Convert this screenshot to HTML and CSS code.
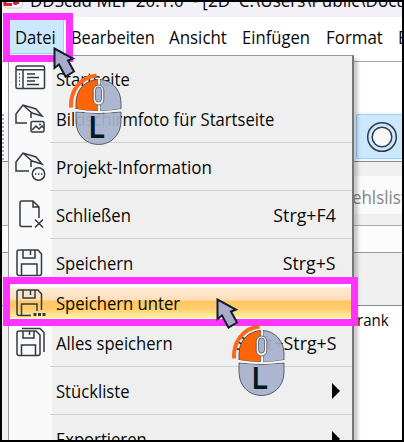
FILE: index.html
```html
<!DOCTYPE html>
<html lang="de">
<head>
<meta charset="utf-8">
<title>DDScad MEP</title>
<link rel="stylesheet" href="styles.css">
</head>
<body>
<div class="window">
  <header class="titlebar">
    <svg class="logo" width="20" height="22"><rect x=".5" y="-4" width="19" height="25" rx="4" fill="#fff" stroke="#ccc"/><path d="M2 10v7.500h7M12.500 13v5M10 15.500h6" fill="none" stroke="#e51c35" stroke-width="3"/></svg>
    <span class="title">DDScad MEP 20.1.0 &nbsp;- [2D &nbsp;C:\Users\Public\Docu</span>
  </header>
  <nav class="menubar">
    <span class="tab active"><span class="t">Datei</span></span>
    <span class="tab bearbeiten"><span class="t">Bearbeiten</span></span>
    <span class="tab ansicht"><span class="t">Ansicht</span></span>
    <span class="tab einfuegen"><span class="t">Einfügen</span></span>
    <span class="tab format"><span class="t">Format</span></span>
    <span class="tab"><span class="t">E</span></span>
  </nav>
  <main class="workspace">
    <section class="toolbar"><div class="grip"></div><div class="tool"><svg width="32" height="32" fill="none" stroke="#303b44" stroke-width="1.5"><circle cx="16" cy="16" r="14.3"/><circle cx="16" cy="16" r="9.8" fill="#f8f8f8"/></svg></div></section>
    <section class="gap"></section>
    <section class="command"><span class="t">ehlslist</span></section>
    <section class="band"></section>
    <section class="rule"></section>
    <section class="head"></section>
    <section class="tree"><span class="t">rank</span></section>
  </main>
</div>

<div class="menu">
  <div class="item"><svg class="icon" viewBox="0 0 34 34"><rect x="1" y="4" width="28.500" height="22.500" rx="1.5"/><path d="M1 7.7h28.500M8 8v18M12 12h8M12 15.500h12M12 19h8M12 22.500h12M4 12h1M4 15.500h1M4 19h1M4 22.500h1"/></svg><span class="t">Startseite</span></div>
  <div class="item"><svg class="icon" viewBox="0 0 34 34"><path d="M12 21H1v-9L8 3l13 4 6 7-10-3L8 3M16 11v5"/><rect x="16" y="19.500" width="13" height="10.500" rx="1.5"/><path d="m17 28 4-4 3 3 3-3 2 2M24 22.500h2"/></svg><span class="t">Bildschirmfoto für Startseite</span></div>
  <div class="sep"></div>
  <div class="item"><svg class="icon" viewBox="0 0 34 34"><path d="M14 21H1v-9L8 3l13 4 6 7-10-3L8 3M16 11v6"/><circle cx="23.500" cy="24" r="6.200"/><path d="M20 24h1.400M23 24h1.400M26 24h1.400"/></svg><span class="t wide">Projekt-Information</span></div>
  <div class="sep"></div>
  <div class="item"><svg class="icon" viewBox="0 0 34 34"><path d="M17 28.500H7a2 2 0 0 1-2-2V5a2 2 0 0 1 2-2h11l6 6v11M18 3v6h6M20 21.500l8 8M28 21.500l-8 8"/></svg><span class="t">Schließen</span><span class="key">Strg+F4</span></div>
  <div class="sep"></div>
  <div class="item"><svg class="icon" viewBox="0 0 34 34"><path d="M4 4h19l3.500 4v19.500a2 2 0 0 1-2 2H4a2 2 0 0 1-2-2V6a2 2 0 0 1 2-2zM8 4v8h12V4M15.500 4v5M6.500 29V18h15.500v11"/></svg><span class="t">Speichern</span><span class="key">Strg+S</span></div>
  <div class="item selected"><svg class="icon" viewBox="0 0 34 34"><path d="M16 29.500H4a2 2 0 0 1-2-2V6a2 2 0 0 1 2-2h19l3.500 4v16M8 4v8h12V4M15.500 4v5M6.500 29V18h15.500v7"/><path d="M18.500 28.500h3M23 28.500h3M27.500 28.500h3" stroke-width="3"/></svg><span class="t">Speichern unter</span></div>
  <div class="item"><svg class="icon" viewBox="0 0 34 34"><path d="M4 5h17l4 4v18.500a2 2 0 0 1-2 2H4a2 2 0 0 1-2-2V7a2 2 0 0 1 2-2zM8 5v7h11V5M14.500 5v4M6.500 29V19h14v10M7 2.500h18l4 4V26"/></svg><span class="t">Alles speichern</span><span class="key">Shift+Strg+S</span></div>
  <div class="sep"></div>
  <div class="item"><span class="icon"></span><span class="t">Stückliste</span><svg class="arrow" width="8" height="16"><path d="M0 0v16l8-8z"/></svg></div>
  <div class="sep"></div>
  <div class="item"><span class="icon"></span><span class="t">Exportieren</span><svg class="arrow" width="8" height="16"><path d="M0 0v16l8-8z"/></svg></div>
</div>

<div class="mark mark-file"></div>
<div class="mark mark-save"></div>

<svg class="hint hint-file" width="72" height="102" viewBox="0 0 72 102"><use href="#hint"/></svg>
<svg class="hint hint-save" width="72" height="102" viewBox="0 0 72 102">
  <defs><g id="hint">
    <path d="M1.500 1.500V21L6 17.500 12.500 29.500 21 24.500 15 13.500 20 11.500z" fill="#a9abcd" stroke="#111f29" stroke-width="2"/>
    <path d="M18 60.500C17 44 27 30 43.500 28.500" fill="none" stroke="#ff681b" stroke-width="4"/>
    <path d="M23 62V56C23 42 33 33 45 32.500V64Q32 64 23 62z" fill="#ff6507" stroke="#40414b" stroke-width=".8"/>
    <path d="M47 32.500C58 33 68 42 68 56V62Q57 64 47 64z" fill="#a7b2cdee" stroke="#40414b" stroke-width=".8"/>
    <path d="M23 65Q45 68 68 65V74C68 88 58 97.500 45.500 97.500S23 88 23 74z" fill="#a7b2cdee" stroke="#40414b" stroke-width=".8"/>
    <path d="M46 32.500V64M22.500 63Q45 67 68.500 63" fill="none" stroke="#f3f3f3" stroke-width="2.200"/>
    <rect x="40.200" y="38" width="10.600" height="20" rx="5.300" fill="#f1f1f1" stroke="#454b57" stroke-width=".8"/>
    <rect x="42.500" y="40" width="6" height="15" rx="3" fill="#a7b2cd" stroke="#454b57" stroke-width=".7"/>
    <text transform="translate(36.200 90.700) scale(.84 1)" font-family="Liberation Sans" font-weight="bold" font-size="30.500" fill="#061620">L</text>
  </g></defs>
  <use href="#hint"/>
</svg>
<div class="frame"></div>
</body>
</html>
```

FILE: styles.css
```css
* { box-sizing: border-box; }
body {
  margin: 0;
  width: 404px;
  height: 442px;
  overflow: hidden;
  position: relative;
  font-family: "Open Sans", "Noto Sans", sans-serif;
  font-size: 19px;
  color: #080808;
  background: #fff;
}
.t, .key { display: inline-block; white-space: nowrap; transform: scaleX(.875); transform-origin: left; }
.wide { transform: scaleX(.895); }
.window { height: 442px; overflow: hidden; }
.titlebar { height: 17px; display: flex; background: #f3f0f7; overflow: hidden; padding-left: 3px; }
.logo { flex: none; margin-top: -13px; }
.title { margin: -13px 0 0 7px; white-space: nowrap; line-height: 26px; transform: scaleX(.895); transform-origin: left; }
.menubar { height: 38px; display: flex; align-items: center; padding-left: 10px; background: #fff; }
.tab { flex: none; height: 34px; line-height: 36px; white-space: nowrap; }
.active { width: 54px; background: #cce8ff; border: solid #99d1ff; border-width: 0 1px 1px 0; padding-left: 5px; margin-top: 2px; line-height: 35px; }
.bearbeiten { width: 105px; padding-left: 7px; }
.bearbeiten .t { transform: scaleX(.86); }
.ansicht { width: 73px; }
.einfuegen { width: 84px; }
.format { width: 72px; }
.ansicht .t, .format .t { transform: scaleX(.89); }
.workspace { display: flex; flex-direction: column; }
.toolbar { height: 107px; border-bottom: 1px solid #888; padding-top: 59px; display: flex; background: linear-gradient(#fff 6px, #aaa 6px 7px, #fff 7px 57px, #f6f7fb 57px); }
.grip { flex: none; width: 2px; height: 46px; margin: 0 352px 0 2px; background: repeating-linear-gradient(#aaa 0 2px, #fff 2px 4px); }
.tool { flex: none; width: 54px; height: 45px; border: 1px solid #99d1ff; border-radius: 2px; background: #cce8ff; padding: 6px 9px; }
.gap { height: 14px; background: #efefef; }
.command { height: 38px; padding-left: 352px; line-height: 42px; color: #858585; background: linear-gradient(90deg, #efefef 8px, #fafafa 8px); overflow: hidden; }
.command .t { transform: scaleX(.89); }
.band { height: 12px; background: #efefef; border-bottom: 1px solid #aaa; }
.rule { height: 27px; background: #fcfcfc; border-bottom: 1px solid #999; }
.head { height: 53px; background: #f0f0f0; border-bottom: 1px solid #888; }
.tree { height: 136px; padding-left: 357px; font-size: 16px; line-height: 29px; background: linear-gradient(90deg, #efefef 8px, #fff 8px); }
.tree .t { transform: scaleX(.94); }
.menu {
  position: absolute;
  left: 8px;
  top: 55px;
  width: 346px;
  height: 400px;
  padding-top: 3px;
  border: 1px solid #999;
  border-right: 2px solid #777;
  background: linear-gradient(90deg, #f9f9f9 43px, #efefef 43px);
  box-shadow: 4px 4px 3px #0003;
}
.item { height: 40px; display: flex; align-items: center; padding: 0 16px 0 6px; }
.icon { flex: none; width: 34px; height: 34px; margin-right: 7px; fill: none; stroke: #303b42; stroke-width: 1.5; }
.item .t { line-height: 40px; }
.key { margin-left: auto; transform: scaleX(.935); transform-origin: right; }
.arrow { margin-left: auto; margin-right: -4px; fill: #000; }
.sep { height: 8px; margin-left: 41px; background: linear-gradient(transparent 3px, #d2d2d2 3px 4px, transparent 4px); }
.selected { background: linear-gradient(#fff 4px, #fce9d6 5px, #ffdeb8 17px, #ffc65e 18px, #ffce70 26px, #fff2a5 35px, #fff 36px); }
.mark { position: absolute; border: 7px solid #ff33ff; }
.mark-file { left: 3px; top: 13px; width: 70px; height: 49px; }
.mark-save { left: 3px; top: 277px; width: 355px; height: 49px; }
.hint { position: absolute; }
.hint-file { left: 53px; top: 47px; }
.hint-save { left: 216px; top: 298px; }
.frame { position: absolute; inset: 0; border: 2px solid #000; }
```
